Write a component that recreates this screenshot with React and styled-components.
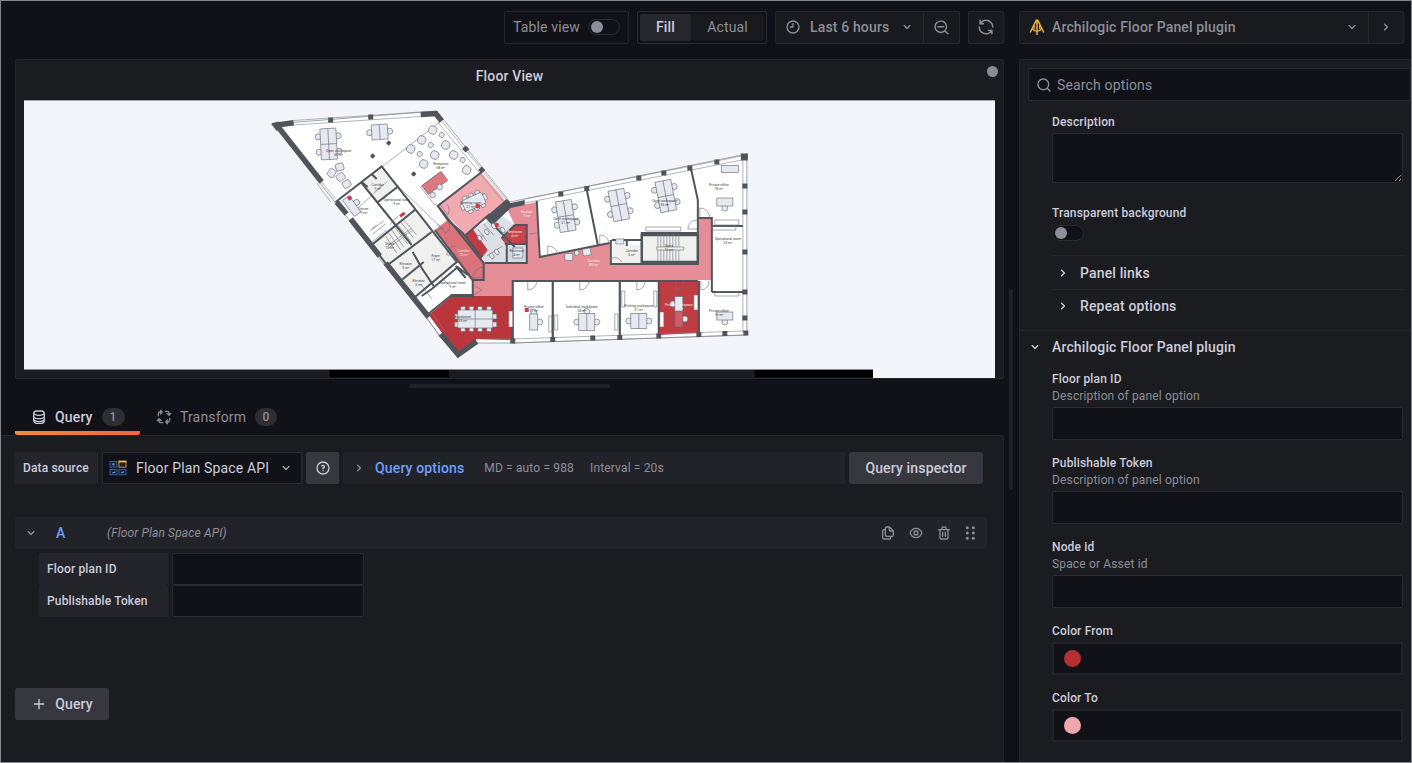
import React from 'react';
import styled, { createGlobalStyle, css } from 'styled-components';

const c = {
  canvas: '#111217',
  panel: '#1b1c20',
  raised: '#24252a',
  line: '#25262b',
  lineStrong: '#2a2b31',
  text: '#ccccdc',
  muted: '#8e8e99',
  button: '#37383d',
  link: '#6e9fff',
  frame: '#85868b',
};

const GlobalStyle = createGlobalStyle`
  *, *::before, *::after { box-sizing: border-box; }
  html, body { margin: 0; height: 100%; background: ${c.canvas}; }
  body {
    font-family: Roboto, "Liberation Sans", sans-serif;
    font-size: 14px;
    line-height: 22px;
    letter-spacing: 0.15px;
    color: ${c.text};
    overflow: hidden;
    -webkit-font-smoothing: antialiased;
  }
`;

/* ---------- icons ---------- */

const ICONS = {
  clock: 'M12,2A10,10,0,1,0,22,12,10,10,0,0,0,12,2Zm0,18a8,8,0,1,1,8-8A8,8,0,0,1,12,20ZM12,6a1,1,0,0,0-1,1v4H8a1,1,0,0,0,0,2h4a1,1,0,0,0,1-1V7A1,1,0,0,0,12,6Z',
  down: 'M17,9.17a1,1,0,0,0-1.41,0L12,12.71,8.46,9.17a1,1,0,0,0-1.41,0,1,1,0,0,0,0,1.42l4.24,4.24a1,1,0,0,0,1.42,0L17,10.59A1,1,0,0,0,17,9.17Z',
  right: 'M14.83,11.29,10.59,7.05a1,1,0,0,0-1.42,0,1,1,0,0,0,0,1.41L12.71,12,9.17,15.54a1,1,0,0,0,0,1.41,1,1,0,0,0,.71.29,1,1,0,0,0,.71-.29l4.24-4.24A1,1,0,0,0,14.83,11.29Z',
  zoomOut: 'M21.71,20.29,18,16.61A9,9,0,1,0,16.61,18l3.68,3.68a1,1,0,0,0,1.42,0A1,1,0,0,0,21.71,20.29ZM11,18a7,7,0,1,1,7-7A7,7,0,0,1,11,18Zm4-8H7a1,1,0,0,0,0,2h8a1,1,0,0,0,0-2Z',
  sync: 'M19.91,15.51H15.38a1,1,0,0,0,0,2h2.4A8,8,0,0,1,4,12a1,1,0,0,0-2,0,10,10,0,0,0,16.88,7.23V21a1,1,0,0,0,2,0V16.5A1,1,0,0,0,19.91,15.51ZM12,2A10,10,0,0,0,5.12,4.77V3a1,1,0,0,0-2,0V7.5a1,1,0,0,0,1,1h4.5a1,1,0,0,0,0-2H6.22A8,8,0,0,1,20,12a1,1,0,0,0,2,0A10,10,0,0,0,12,2Z',
  search: 'M21.71,20.29,18,16.61A9,9,0,1,0,16.61,18l3.68,3.68a1,1,0,0,0,1.42,0A1,1,0,0,0,21.71,20.29ZM11,18a7,7,0,1,1,7-7A7,7,0,0,1,11,18Z',
  help: 'M11.29,15.29a1.58,1.58,0,0,0-.12.15.76.76,0,0,0-.09.18.64.64,0,0,0-.06.18,1.36,1.36,0,0,0,0,.2.84.84,0,0,0,.08.38.9.9,0,0,0,.54.54.94.94,0,0,0,.76,0,.9.9,0,0,0,.54-.54A1,1,0,0,0,13,16a1,1,0,0,0-.29-.71A1,1,0,0,0,11.29,15.29ZM12,2A10,10,0,1,0,22,12,10,10,0,0,0,12,2Zm0,18a8,8,0,1,1,8-8A8,8,0,0,1,12,20ZM12,7A3,3,0,0,0,9.4,8.5a1,1,0,1,0,1.73,1A1,1,0,0,1,12,9a1,1,0,0,1,0,2,1,1,0,0,0-1,1v1a1,1,0,0,0,2,0v-.18A3,3,0,0,0,12,7Z',
  copy: 'M21,8.94a1.31,1.31,0,0,0-.06-.27l0-.09a1.07,1.07,0,0,0-.19-.28h0l-6-6h0a1.07,1.07,0,0,0-.28-.19.32.32,0,0,0-.09,0A.88.88,0,0,0,14.05,2H10A3,3,0,0,0,7,5V6H6A3,3,0,0,0,3,9V19a3,3,0,0,0,3,3h8a3,3,0,0,0,3-3V18h1a3,3,0,0,0,3-3V9S21,9,21,8.94ZM15,5.41,17.59,8H16a1,1,0,0,1-1-1ZM15,19a1,1,0,0,1-1,1H6a1,1,0,0,1-1-1V9A1,1,0,0,1,6,8H7v7a3,3,0,0,0,3,3h5Zm4-4a1,1,0,0,1-1,1H10a1,1,0,0,1-1-1V5a1,1,0,0,1,1-1h3V7a3,3,0,0,0,3,3h3Z',
  eye: 'M21.92,11.6C19.9,6.91,16.1,4,12,4S4.1,6.91,2.08,11.6a1,1,0,0,0,0,.8C4.1,17.09,7.9,20,12,20s7.9-2.91,9.92-7.6A1,1,0,0,0,21.92,11.6ZM12,18c-3.17,0-6.17-2.29-7.9-6C5.83,8.29,8.83,6,12,6s6.17,2.29,7.9,6C18.17,15.71,15.17,18,12,18ZM12,8a4,4,0,1,0,4,4A4,4,0,0,0,12,8Zm0,6a2,2,0,1,1,2-2A2,2,0,0,1,12,14Z',
  trash: 'M10,18a1,1,0,0,0,1-1V11a1,1,0,0,0-2,0v6A1,1,0,0,0,10,18ZM20,6H16V5a3,3,0,0,0-3-3H11A3,3,0,0,0,8,5V6H4A1,1,0,0,0,4,8H5V19a3,3,0,0,0,3,3h8a3,3,0,0,0,3-3V8h1a1,1,0,0,0,0-2ZM10,5a1,1,0,0,1,1-1h2a1,1,0,0,1,1,1V6H10Zm7,14a1,1,0,0,1-1,1H8a1,1,0,0,1-1-1V8H17Zm-3-1a1,1,0,0,0,1-1V11a1,1,0,0,0-2,0v6A1,1,0,0,0,14,18Z',
  plus: 'M19,11H13V5a1,1,0,0,0-2,0v6H5a1,1,0,0,0,0,2h6v6a1,1,0,0,0,2,0V13h6a1,1,0,0,0,0-2Z',
};

const Svg = styled.svg`
  display: block;
  flex: none;
`;

const Icon = ({ name, size = 16 }) => (
  <Svg width={size} height={size} viewBox="0 0 24 24" fill="currentColor">
    <path d={ICONS[name]} />
  </Svg>
);

const DatabaseIcon = () => (
  <Svg width="16" height="16" viewBox="0 0 24 24" fill="none" stroke="currentColor" strokeWidth="1.900">
    <rect x="4" y="3" width="16" height="18.500" rx="4.500" />
    <path d="M4 6.500c1 2 4 3 8 3s7-1 8-3M4 11.500c1 2 4 3 8 3s7-1 8-3M4 16c1 1.800 4 2.800 8 2.800s7-1 8-2.800" />
  </Svg>
);

const ProcessIcon = () => (
  <Svg width="16" height="16" viewBox="0 0 24 24" fill="none" stroke="currentColor" strokeWidth="2" strokeLinecap="round" strokeLinejoin="round">
    {[0, 90, 180, 270].map((angle) => (
      <path key={angle} transform={`rotate(${angle} 12 12)`} d="M3.500 10V7a2.500 2.500 0 0 1 2.500-2.500H9M6.800 2 9.300 4.500 6.800 7.500" />
    ))}
  </Svg>
);

const DragIcon = () => (
  <Svg width="13" height="16" viewBox="0 0 13 16" fill="currentColor">
    {[2.7, 8, 13.3].map((y) => (
      <React.Fragment key={y}>
        <circle cx="3.300" cy={y} r="1.500" />
        <circle cx="9.300" cy={y} r="1.500" />
      </React.Fragment>
    ))}
  </Svg>
);

const ArchilogicLogo = () => (
  <Svg width="16" height="18" viewBox="0 0 16 18" fill="none" stroke="#eab041" strokeWidth="1.500">
    <path d="M8 2.500V17M1.200 14.500 7.200 2.300h1.600l6 12.200" />
    <path d="M3.400 10.300c.8 2 2.500 2.900 4.600 2.900s3.800-.9 4.600-2.900M5.300 7.300c.4 1.500 0 4-.9 5.200M10.700 7.300c-.4 1.500 0 4 .9 5.200" strokeWidth="1.200" />
  </Svg>
);

const SourceLogo = () => (
  <Svg width="18" height="16" viewBox="0 0 18 16" fill="#15233f" stroke="#34589a" strokeWidth="1">
    <rect x="1" y="1.500" width="7" height="5.700" />
    <rect x="10" y="1.500" width="7" height="5.700" stroke="#c98f35" fill="#20201f" />
    <path d="M9.500 1.500h8" stroke="#f0bd45" strokeWidth="1.800" />
    <rect x="1" y="9.500" width="7" height="5.300" />
    <rect x="10" y="9.500" width="7" height="5.300" />
    <path d="M3.300 13l3-1M12 13l3-1.300" stroke="#86a6da" />
    <circle cx="4.500" cy="4.300" r=".8" stroke="#86a6da" />
  </Svg>
);

/* ---------- frame ---------- */

const Frame = styled.div`
  width: 1412px;
  height: 763px;
  display: flex;
  border: 1px solid ${c.frame};
  background: ${c.canvas};
  overflow: hidden;
`;

const MainColumn = styled.main`
  width: 1003px;
  display: flex;
  flex-direction: column;
  flex: none;
`;

const SplitColumn = styled.div`
  width: 15px;
  flex: none;
  display: flex;
  padding: 288px 0 0 5px;
`;

const Handle = styled.div`
  flex: none;
  border-radius: 2px;
  background: #202126;
  ${(p) => (p.$vertical ? css`width: 4px; height: 201px;` : css`width: 201px; height: 4px;`)}
`;

const SideColumn = styled.aside`
  flex: 1;
  min-width: 0;
  display: flex;
  flex-direction: column;
  padding-top: 10px;
`;

/* ---------- toolbar ---------- */

const Toolbar = styled.div`
  display: flex;
  justify-content: flex-end;
  gap: 8px;
  height: 58px;
  padding: 10px 0 0;
`;

const ToolBox = styled.div`
  display: flex;
  align-items: center;
  height: 33px;
  padding-bottom: 1px;
  border: 1px solid ${c.line};
  border-radius: 2px;
  background: ${(p) => (p.$dark ? c.canvas : '#191a1e')};
  color: ${c.muted};
`;

const TableToggle = styled(ToolBox)`
  width: 125px;
  padding-left: 8px;
  gap: 8px;
`;

const Switch = styled.span`
  width: 32px;
  height: 16px;
  flex: none;
  display: flex;
  align-items: center;
  padding-left: 2px;
  border: 1px solid ${c.lineStrong};
  border-radius: 8px;
  background: ${c.canvas};

  &::before {
    content: '';
    width: 12px;
    height: 12px;
    border-radius: 50%;
    background: #8e8e99;
  }
`;

const RadioGroup = styled(ToolBox)`
  width: 130px;
  padding: 2px;
  border-color: ${c.lineStrong};
`;

const RadioOption = styled.span`
  height: 27px;
  display: flex;
  align-items: center;
  justify-content: center;
  padding-bottom: 1px;
  border-radius: 2px;
  width: ${(p) => p.$width}px;
  ${(p) => (p.$active
    ? css`background: #26272c; color: ${c.text}; font-weight: 500;`
    : css`background: #191a1e;`)}
`;

const ToolSegment = styled.span`
  height: 31px;
  display: flex;
  align-items: center;
  justify-content: center;
  width: ${(p) => p.$width}px;
  flex: none;
  ${(p) => p.$divided && css`border-left: 1px solid ${c.line};`}
`;

const RangeSegment = styled(ToolSegment)`
  justify-content: flex-start;
  padding-left: 9px;
  font-weight: 500;
`;

const RangeText = styled.span`
  flex: 1;
  margin-left: 9px;
`;

const ChevronSlot = styled.span`
  margin-right: 8px;
`;

/* ---------- visualisation panel ---------- */

const VizPanel = styled.section`
  width: 989px;
  height: 320px;
  margin-left: 14px;
  display: flex;
  flex-direction: column;
  background: ${c.panel};
  border: 1px solid ${c.line};
  border-radius: 2px;
  padding: 0 8px;
  position: relative;
`;

const VizTitle = styled.h2`
  margin: 0;
  height: 40px;
  padding-top: 5px;
  text-align: center;
  font-size: 14px;
  line-height: 22px;
  font-weight: 500;
`;

const StatusDot = styled.span`
  position: absolute;
  right: 5px;
  top: 6px;
  width: 11px;
  height: 11px;
  border-radius: 50%;
  background: #8b8b94;
`;

const Plan = styled.svg`
  display: block;
  width: 971px;
  height: 278px;
  flex: none;
`;

const HandleRow = styled.div`
  height: 17px;
  padding: 5px 0 0 13px;
  display: flex;
  justify-content: center;
`;

/* ---------- tabs and queries ---------- */

const Tabs = styled.nav`
  display: flex;
  height: 39px;
  padding-left: 14px;
`;

const Tab = styled.div`
  width: ${(p) => p.$width}px;
  height: 39px;
  padding: 6px 0 0 16px;
  display: flex;
  align-items: center;
  color: ${(p) => (p.$active ? c.text : c.muted)};
  font-weight: ${(p) => (p.$active ? 500 : 400)};
  border-bottom: 4px solid transparent;
  ${(p) => p.$active && css`
    background: linear-gradient(90deg, #f58a3c, #ee6548) bottom / 100% 4px no-repeat border-box;
    border-radius: 2px;
  `}
`;

const TabText = styled.span`
  margin: 0 9px 0 8px;
`;

const Counter = styled.span`
  width: 23px;
  height: 18px;
  border-radius: 9px;
  background: #2e2f34;
  color: ${c.muted};
  font-size: 12px;
  line-height: 18px;
  font-weight: 500;
  text-align: center;
`;

const QueryPane = styled.section`
  flex: 1;
  background: ${c.panel};
  border: solid ${c.line};
  border-width: 1px 1px 0 0;
  border-radius: 0 2px 0 0;
  padding: 16px 16px 0 14px;
`;

const SourceRow = styled.div`
  display: flex;
  gap: 4px;
  height: 32px;
  width: 968px;
`;

const LabelCell = styled.span`
  display: flex;
  align-items: center;
  padding-left: 8px;
  height: 32px;
  width: ${(p) => p.$width}px;
  flex: none;
  border-radius: 2px;
  background: ${c.raised};
  font-size: 12px;
  font-weight: 500;
`;

const SourceSelect = styled.span`
  width: 200px;
  flex: none;
  display: flex;
  align-items: center;
  padding: 0 7px 0 6px;
  border: 1px solid ${c.lineStrong};
  border-radius: 2px;
  background: ${c.canvas};
`;

const SourceName = styled.span`
  flex: 1;
  margin-left: 9px;
  white-space: nowrap;
`;

const Dim = styled.span`
  color: #a0a0ac;
`;

const Button = styled.button`
  display: flex;
  align-items: center;
  justify-content: center;
  gap: 8px;
  width: ${(p) => p.$width}px;
  height: ${(p) => p.$height || 32}px;
  flex: none;
  padding: 0;
  border: 0;
  border-radius: 2px;
  background: ${c.button};
  color: ${c.text};
  font: inherit;
  font-weight: 500;
  letter-spacing: inherit;
`;

const OptionsBar = styled.div`
  flex: 1;
  display: flex;
  align-items: center;
  padding-left: 8px;
  border-radius: 2px;
  background: #222328;
  color: ${c.muted};
  font-size: 12px;
`;

const OptionsTitle = styled.span`
  margin: 0 20px 0 8px;
  font-size: 14px;
  font-weight: 500;
  color: ${c.link};
`;

const OptionsInfo = styled.span`
  margin-right: 16px;
`;

const QueryHeader = styled.div`
  display: flex;
  align-items: center;
  width: 972px;
  height: 32px;
  margin-top: 33px;
  padding: 0 10px 0 8px;
  border-radius: 2px;
  background: #222328;
  color: ${c.muted};
`;

const RefId = styled.span`
  width: 51px;
  margin-left: 17px;
  font-weight: 500;
  color: ${c.link};
`;

const QuerySource = styled.em`
  flex: 1;
  font-size: 12px;
`;

const QueryActions = styled.div`
  display: flex;
  gap: 12px;
`;

const QueryFields = styled.div`
  display: flex;
  flex-direction: column;
  padding: 4px 0 0 24px;
`;

const QueryField = styled.label`
  display: flex;
  gap: 4px;
  height: 32px;
`;

const Input = styled.input`
  display: block;
  width: ${(p) => (p.$width ? `${p.$width}px` : '100%')};
  height: ${(p) => p.$height || 33}px;
  border: 1px solid ${c.lineStrong};
  border-radius: 2px;
  background: ${c.canvas};
  color: ${c.text};
  padding: 0 8px;
  font: inherit;
`;

const AddRow = styled.div`
  margin-top: 71px;
`;

/* ---------- options side pane ---------- */

const PluginPicker = styled(ToolBox)`
  width: 385px;
  font-weight: 500;
`;

const PickerMain = styled.span`
  flex: 1;
  display: flex;
  align-items: center;
  padding: 0 8px 0 9px;
`;

const PickerText = styled.span`
  flex: 1;
  margin-left: 7px;
`;

const OptionsPane = styled.section`
  flex: 1;
  margin-top: 15px;
  background: ${c.panel};
  border: solid ${c.line};
  border-width: 1px 0 0 1px;
  border-radius: 2px 0 0 0;
`;

const SearchBox = styled.div`
  display: flex;
  align-items: center;
  gap: 5px;
  height: 33px;
  margin: 8px 0 0 8px;
  padding-left: 7px;
  border: 1px solid ${c.lineStrong};
  border-radius: 2px;
  background: ${c.canvas};
  color: ${c.muted};
`;

const Fields = styled.div`
  width: 383px;
  padding-left: 32px;
`;

const FieldTitle = styled.div`
  font-size: 12px;
  line-height: 16px;
  font-weight: 500;
`;

const FieldHint = styled.div`
  margin-top: 1px;
  font-size: 12px;
  line-height: 16px;
  color: ${c.muted};
`;

const DescriptionField = styled.div`
  height: 93px;
  padding-top: 13px;
`;

const TextArea = styled.textarea`
  display: block;
  width: 100%;
  height: 50px;
  margin-top: 3px;
  border: 1px solid ${c.lineStrong};
  border-radius: 2px;
  background: ${c.canvas};
  resize: vertical;
`;

const ToggleField = styled.div`
  height: 61px;
  padding-top: 11px;

  ${Switch} { margin-top: 4px; }
`;

const SubSection = styled.div`
  display: flex;
  align-items: center;
  gap: 9px;
  height: ${(p) => p.$height}px;
  padding: 0 0 ${(p) => p.$bottom || 0}px 3px;
  border-top: 1px solid ${c.line};
  font-weight: 500;
`;

const PluginSection = styled.div`
  border-top: 1px solid ${c.line};
`;

const SectionTitle = styled.div`
  display: flex;
  align-items: center;
  gap: 9px;
  height: 32px;
  padding: 0 0 1px 7px;
  font-weight: 500;
`;

const OptionField = styled.div`
  height: ${(p) => p.$height}px;
  padding-top: 8px;
`;

const InputSpacer = styled.div`
  margin-top: 3px;
`;

const ColorInput = styled.div`
  display: flex;
  align-items: center;
  height: 33px;
  margin-top: 3px;
  padding-left: 10px;
  border: 2px solid #222328;
  border-radius: 2px;
  background: ${c.canvas};

  &::before {
    content: '';
    width: 17px;
    height: 17px;
    border-radius: 50%;
    background: ${(p) => p.$color};
  }
`;

/* ---------- floor plan drawing ---------- */

const WALL = '#50555c';
const THIN = '#7d828a';
const DESK = '#e6eaf0';

const Desk = ({ x, y, w = 18, h = 14, a = 0, rows = 1, fill = DESK, chairs = 'lr' }) => (
  <g transform={`translate(${x} ${y}) rotate(${a})`} stroke="#5d6470" strokeWidth=".6" fill={fill}>
    {Array.from({ length: rows }).map((_, i) => {
      const cy = -h / 2 + (h / rows) * (i + 0.5);
      return (
        <React.Fragment key={i}>
          {chairs.includes('l') && <circle cx={-w / 2 - 2} cy={cy} r="3" fill={DESK} />}
          {chairs.includes('r') && <circle cx={w / 2 + 2} cy={cy} r="3" fill={DESK} />}
        </React.Fragment>
      );
    })}
    {chairs.includes('b') && <circle cx="0" cy={h / 2 + 2} r="3" fill={DESK} />}
    {chairs.includes('t') && <circle cx="0" cy={-h / 2 - 2} r="3" fill={DESK} />}
    <rect x={-w / 2} y={-h / 2} width={w} height={h} />
    {w >= 14 && rows > 0 && !chairs.includes('b') && <path d={`M0 ${-h / 2}V${h / 2}`} />}
    {rows > 1 && <path d={`M${-w / 2} 0H${w / 2}`} />}
  </g>
);

const RoomLabel = ({ x, y, name, area, light }) => (
  <text
    x={x}
    y={y}
    textAnchor="middle"
    fontSize="3.400"
    letterSpacing="0"
    fill={light ? '#f7e9ea' : '#3c3f44'}
    fontFamily="Roboto, sans-serif"
  >
    {name}
    <tspan x={x} dy="4.200">{area}</tspan>
  </text>
);

const LABELS = [
  [339, 152, 'Open workspace', '65 m²'], [441, 165, 'Reception', '58 m²'],
  [378, 186, 'Corridor', '7 m²'], [397, 201, 'Operational room', '9 m²'],
  [364, 210, 'Server', '9 m²'], [390, 245, 'Stairs', '15 m²'],
  [436, 257, 'Foyer', '17 m²'], [406, 265, 'Elevator', '5 m²'],
  [419, 282, 'Elevator', '5 m²'], [453, 284, 'Operational room', '9 m²'],
  [471, 204, 'Meeting room', '21 m²'], [464, 252, 'Corridor', '10 m²', true],
  [527, 213, 'Storage', '7 m²', true], [515, 233, 'Restroom', '4 m²', true],
  [517, 252, 'Restroom', '4 m²'], [566, 220, 'Open workspace', '31 m²'],
  [594, 262, 'Corridor', '80 m²', true], [665, 202, 'Open workspace', '55 m²'],
  [719, 186, 'Private office', '18 m²'], [728, 240, 'Operational room', '23 m²'],
  [632, 252, 'Corridor', '6 m²'], [669, 247, 'Stairs', '15 m²'],
  [534, 308, 'Private office', '17 m²'], [582, 308, 'Individual workspace', '28 m²'],
  [639, 307, 'Printing workspace', '21 m²'], [679, 306, 'Private workspace', '19 m²', true],
  [719, 312, 'Private office', '15 m²'], [463, 318, 'Boardroom', '35 m²'],
];

const LOUNGE = [[411, 149, 4], [422, 140, 4], [433, 130, 4], [446, 145, 4], [435, 155, 4], [424, 164, 4],
  [454, 155, 4], [467, 170, 4], [420, 154, 2.4], [431, 145, 2.4], [442, 135, 2.4], [463, 160, 2.4]];

const FloorPlan = () => (
  <Plan viewBox="24.500 100 970.500 278" preserveAspectRatio="none">
    <path d="M24.500 100H995V378H873V369.500H24.500Z" fill="#f4f5fa" />
    <path d="M24.500 100.500H995" stroke="#a6a7ab" />
    <path d="M24.500 369.500H873" stroke="#8c8d92" strokeWidth=".7" />
    <path d="M330 370H449V377.300H330ZM755 370H873V377.300H755Z" fill="#000" />

    <path d="M274 124 437 111 510 202 747 154V335L513 343H478L458 358Z" fill="#fff" stroke={THIN} strokeWidth=".7" />

    {/* room fills */}
    <g fill="#f0f0ee">
      <path d="M362 182 382 167 399 185 377 203Z" />
      <path d="M372 245 415 210 457 263 415 299Z" />
      <path d="M642 233H698V263H612V245H642Z" />
    </g>
    <path d="M438 206 482 173 506 201 466 235Z" fill="#f2aab1" />
    <path d="M435 230 448 220 466 235 485 263V281H472Z" fill="#d9727b" />
    <path d="M484 263H527V233H539V257L610 243V263H698V218H712V280H513V296H473V281H484Z" fill="#e58e97" />
    <path d="M507 208 537 202 539 234H527V225H515Z" fill="#e58e97" />
    <path d="M473 229 500 214 515 225 502 238 510 244V263H485Z" fill="#dcdfe5" />
    <path d="M465 236 473 229 488 250 482 258Z" fill="#bf3a42" />
    <path d="M515 225H527V243H505L501 238Z" fill="#c8434b" />
    <path d="M507 244H527V263H507Z" fill="#d7dae0" />
    <path d="M452 296H513V340L477 339 458 354 429 315Z" fill="#ba353c" />
    <path d="M659 281H699V333L659 335Z" fill="#bf3c43" />

    {/* window bands */}
    <g fill="none" stroke={THIN} strokeWidth=".6">
      <path d="M294 120.500 421 112M294 125 421 116.500M438 122 504 202M441 120 507 200M525 203 742 160M525 199 742 156" />
      <path d="M743 160V333M744 335 513 343M744 331 513 339M317 183 331 202M322 182 336 199M427 317 440 337M433 314 445 331M478 339H513" />
      <path d="M382 167 440 122M396 184 443 229M357 209 388 181" />
    </g>

    {/* exterior walls */}
    <g fill="none" stroke={WALL} strokeWidth="5.400">
      <path d="M294 122.700 277 125 322 182M337 202 347 214M351 219 380 256M386 263 429 317M441 334 458.500 354.500 477 341.500" />
      <path d="M421 114.500 436 113.500 442 121" />
    </g>
    <g fill={WALL}>
      <path d="M271.500 124 279 121.500 281 128 277 131Z" />
      <path d="M486 217 507 199 511 203 525 200V205L511 208 494 224Z" />
      {[[331, 120], [371, 117], [466, 149], [482, 170], [561, 194], [587, 188.500], [639, 178], [664, 173], [690, 168], [717, 162],
        [745, 157], [745, 186], [745, 212], [745, 252], [745, 292], [745, 318], [746, 333], [725, 333.500], [699, 334.500], [659, 336],
        [620, 337.500], [593, 338], [553, 339.500], [513, 341]].map(([x, y]) => (
        <rect key={`${x}-${y}`} x={x - 2.500} y={y - 2.500} width="5" height="5" transform={`rotate(${x > 440 && x < 500 ? 45 : 0} ${x} ${y})`} />
      ))}
      <rect x="741" y="153.500" width="7" height="7" />
      {[[389, 143], [373, 156], [414, 174]].map(([x, y]) => (
        <rect key={x} x={x - 2} y={y - 2} width="4" height="4" rx="1" transform={`rotate(40 ${x} ${y})`} />
      ))}
    </g>

    {/* interior walls */}
    <g fill="none" stroke={WALL} strokeWidth="2">
      <path d="M336 202 382 166.500 457 262 413 299 372 245 415 210M362 183 412 245M377 203 399 186M388 265 432 232M402 280 424 262" />
      <path d="M362 182 368 187M372 174 377 179M413 252 422 268 434 286M448 220 438 206 482 172M438 206 484 263V280H473V295H452L426 316M435 230 473 280" />
      <path d="M416 299 424 309M422 296 432 289 438 284 458 267 468 275M456 266 466 278" />
      <path d="M448 220 463 233 482 258M466 235 490 214M487 218 515 247M515 225H527V263H485M502 238 515 225M505 244H527M507 244V263M537 201 540 257 610 243M587 190 598 245" />
      <path d="M691 168 698 200V264H611V240M642 262V233H697M612 240H642M627 240V246M697 218H712V292M712 226H743M712 292H743" />
      <path d="M512 281H698M513 281V341M553 281V340M620 281V338M659 281V335M699 281V333M452 296H474" strokeWidth="2.200" />
      <path d="M642 262H698V235H642Z" strokeWidth="2.400" />
    </g>

    {/* partitions, stairs and doors */}
    <g fill="none" stroke="#6d7179" strokeWidth=".6">
      <path d="M658 234V247M661 234V247M664 234V247M667 234V247M670 234V247M673 234V247M676 234V247M679 234V247M658 250V261M661 250V261M664 250V261M667 250V261M670 250V261M673 250V261M676 250V261M679 250V261M657 247H684V250H657Z" />
      <path d="M386 236 397 253M389 233 401 250M392 230 404 247M395 227 408 244M398 225 411 241M401 222 414 238M404 220 417 235M388 246 412 228M389 248 413 230" />
      <path d="M528 281V290A9 9 0 0 0 537 281M580 281V290A9 9 0 0 0 589 281M637 281V290A8 8 0 0 0 645 281M676 281V290A8 8 0 0 0 684 281M701 281V290A8 8 0 0 0 709 281" />
      <path d="M700 218V208A10 10 0 0 1 710 218M698 229H688A9 9 0 0 1 697 220M548 256V246A10 10 0 0 1 558 254M600 245V235A9 9 0 0 1 609 242M484 267A11 11 0 0 0 473 278H484M457 255H447A9 9 0 0 1 456 246M441 205 448 215A9 9 0 0 0 447 204M438 224 446 233A8 8 0 0 0 449 222" />
      <path d="M421 284 432 299M440 275 449 285M427 234 443 228M375 192 382 185M612 258A9 9 0 0 1 622 262M474 285 482 290 474 295M529 234 537 233" />
      <path d="M549 316H552V332H549ZM555 315H558V330H555ZM615 314H618V330H615ZM622 291H625V307H622ZM654 291H657V307H654ZM646 227H681V231H646ZM715 220H739V225H715ZM712 226H736V230H712ZM715 292H739V296H715Z" />
      <path d="M421 187 440 172M421 187 435 205 437 203M370 244 387 230M373 229 384 221M390 225 398 216" />
      <path d="M478 229 487 241M484 224 494 235M490 219 500 229M474 244 484 235M487 256 503 246M496 222 509 238" />
    </g>
    <g fill="#fff" stroke="#8b5055" strokeWidth=".5">
      <path d="M694 295H698V310H694ZM660 312H664V327H660ZM509 311H513V327H509Z" />
    </g>

    {/* furniture */}
    <Desk x={329} y={144} w={16} h={31} a={-3} rows={2} />
    <Desk x={380} y={132} w={16} h={15} a={-4} />
    <Desk x={566} y={216} w={16} h={31} a={-9} rows={2} />
    <Desk x={619} y={205} w={16} h={31} a={-11} rows={2} />
    <Desk x={666} y={196} w={16} h={31} a={-11} rows={2} />
    <Desk x={587} y={322} w={16} h={17} chairs="lrt" />
    <Desk x={639} y={321} w={16} h={15} />
    <Desk x={534} y={322} w={8} h={16} chairs="rt" />
    <Desk x={725} y={202} w={16} h={8} chairs="b" />
    <Desk x={725} y={316} w={16} h={8} chairs="b" />
    <Desk x={730} y={169} w={17} h={7} chairs="" rows={0} />
    <Desk x={679} y={304} w={8} h={15} chairs="l" />
    <Desk x={679} y={319} w={8} h={16} chairs="r" fill="#d45a63" />
    <Desk x={435} y={183} w={24} h={11} a={-36} chairs="" rows={0} fill="#dc7882" />
    <Desk x={352} y={206} w={8} h={20} a={-36} chairs="r" />
    <g fill={DESK} stroke="#5d6470" strokeWidth=".6">
      {LOUNGE.map(([x, y, r]) => <rect key={`${x}${y}`} x={x - r} y={y - r} width={r * 2} height={r * 2} rx={r * 0.75} transform={`rotate(25 ${x} ${y})`} />)}
      {[[332, 173, -55], [340, 167, -15], [341, 177, -35], [347, 184, -30], [569, 257, 0], [587, 252, -10]].map(([x, y, a]) => (
        <rect key={`${x}${y}`} x={x - 4} y={y - 3.500} width="8" height="7" rx="1.500" transform={`rotate(${a} ${x} ${y})`} />
      ))}
      <circle cx="577" cy="253" r="2.400" />
      <circle cx="433" cy="195" r="2.700" />
      <circle cx="440" cy="187" r="2.700" />
      <g transform="translate(474 202) rotate(-25)">
        {[-7, 0, 7].map((x) => <rect key={x} x={x - 2} y="-9" width="4.500" height="18" rx="1" />)}
        <rect x="-14" y="-3" width="28" height="6" rx="1" />
        <rect x="-11" y="-6" width="22" height="12" rx="2" />
      </g>
      {[463, 471.500, 480, 489].map((x) => <rect key={x} x={x - 2} y="306.500" width="4.500" height="25" rx=".5" />)}
      <path d="M455 314H497V319H455ZM455 322H497V327H455Z" />
      <path d="M458 310H493V328H458ZM475.500 310V328M458 319H493" />
      {[[480, 238], [487, 232], [494, 226], [497, 252], [503, 230], [492, 256]].map(([x, y]) => (
        <ellipse key={`${x}${y}`} cx={x} cy={y} rx="2" ry="3" transform={`rotate(-35 ${x} ${y})`} />
      ))}
      <path d="M513 248H523V258H513ZM616 239H624V244H616ZM373 234 386 224M370 231 377 225" />
    </g>
    <g fill="#c93e48">
      <circle cx="478" cy="206" r="2.400" />
      <rect x="525" y="308" width="4" height="4" />
      <rect x="348" y="196" width="4" height="4" transform="rotate(-35 350 198)" />
      <rect x="400" y="213" width="6" height="3" transform="rotate(-35 403 215)" />
      <rect x="495" y="223" width="4" height="4" rx="1" />
    </g>
    {LABELS.map(([x, y, name, area, light]) => (
      <RoomLabel key={`${x}-${y}`} x={x} y={y} name={name} area={area} light={light} />
    ))}
  </Plan>
);

/* ---------- page ---------- */

const TextOption = ({ title, hint }) => (
  <OptionField $height={84}>
    <FieldTitle>{title}</FieldTitle>
    <FieldHint>{hint}</FieldHint>
    <InputSpacer><Input aria-label={title} /></InputSpacer>
  </OptionField>
);

export default function App() {
  return (
    <>
      <GlobalStyle />
      <Frame>
        <MainColumn>
          <Toolbar>
            <TableToggle $dark>Table view<Switch /></TableToggle>
            <RadioGroup $dark>
              <RadioOption $active $width={51}>Fill</RadioOption>
              <RadioOption $width={73}>Actual</RadioOption>
            </RadioGroup>
            <ToolBox>
              <RangeSegment $width={147}>
                <Icon name="clock" />
                <RangeText>Last 6 hours</RangeText>
                <ChevronSlot><Icon name="down" /></ChevronSlot>
              </RangeSegment>
              <ToolSegment $width={36} $divided><Icon name="zoomOut" size={17} /></ToolSegment>
            </ToolBox>
            <ToolBox><ToolSegment $width={34}><Icon name="sync" size={18} /></ToolSegment></ToolBox>
          </Toolbar>

          <VizPanel>
            <VizTitle>Floor View</VizTitle>
            <StatusDot />
            <FloorPlan />
          </VizPanel>
          <HandleRow><Handle /></HandleRow>

          <Tabs>
            <Tab $active $width={125}>
              <DatabaseIcon /><TabText>Query</TabText><Counter>1</Counter>
            </Tab>
            <Tab $width={137}>
              <ProcessIcon /><TabText>Transform</TabText><Counter>0</Counter>
            </Tab>
          </Tabs>

          <QueryPane>
            <SourceRow>
              <LabelCell $width={83}>Data source</LabelCell>
              <SourceSelect>
                <SourceLogo />
                <SourceName>Floor Plan Space API</SourceName>
                <Dim><Icon name="down" /></Dim>
              </SourceSelect>
              <Button $width={33} aria-label="Help"><Icon name="help" /></Button>
              <OptionsBar>
                <Icon name="right" />
                <OptionsTitle>Query options</OptionsTitle>
                <OptionsInfo>MD = auto = 988</OptionsInfo>
                <OptionsInfo>Interval = 20s</OptionsInfo>
              </OptionsBar>
              <Button $width={134}>Query inspector</Button>
            </SourceRow>

            <QueryHeader>
              <Icon name="down" />
              <RefId>A</RefId>
              <QuerySource>(Floor Plan Space API)</QuerySource>
              <QueryActions>
                <Icon name="copy" />
                <Icon name="eye" />
                <Icon name="trash" />
                <DragIcon />
              </QueryActions>
            </QueryHeader>
            <QueryFields>
              <QueryField>
                <LabelCell $width={129}>Floor plan ID</LabelCell>
                <Input $width={192} $height={32} />
              </QueryField>
              <QueryField>
                <LabelCell $width={129}>Publishable Token</LabelCell>
                <Input $width={192} $height={32} />
              </QueryField>
            </QueryFields>
            <AddRow>
              <Button $width={94}><Icon name="plus" />Query</Button>
            </AddRow>
          </QueryPane>
        </MainColumn>

        <SplitColumn><Handle $vertical /></SplitColumn>

        <SideColumn>
          <PluginPicker>
            <PickerMain>
              <ArchilogicLogo />
              <PickerText>Archilogic Floor Panel plugin</PickerText>
              <Icon name="down" />
            </PickerMain>
            <ToolSegment $width={35} $divided><Icon name="right" /></ToolSegment>
          </PluginPicker>

          <OptionsPane>
            <SearchBox><Icon name="search" />Search options</SearchBox>
            <Fields>
              <DescriptionField>
                <FieldTitle>Description</FieldTitle>
                <TextArea />
              </DescriptionField>
              <ToggleField>
                <FieldTitle>Transparent background</FieldTitle>
                <Switch />
              </ToggleField>
              <SubSection $height={34}><Icon name="right" />Panel links</SubSection>
              <SubSection $height={41} $bottom={8}><Icon name="right" />Repeat options</SubSection>
            </Fields>
            <PluginSection>
              <SectionTitle><Icon name="down" />Archilogic Floor Panel plugin</SectionTitle>
              <Fields>
                <TextOption title="Floor plan ID" hint="Description of panel option" />
                <TextOption title="Publishable Token" hint="Description of panel option" />
                <TextOption title="Node id" hint="Space or Asset id" />
                <OptionField $height={67}>
                  <FieldTitle>Color From</FieldTitle>
                  <ColorInput $color="#b52f34" />
                </OptionField>
                <OptionField $height={67}>
                  <FieldTitle>Color To</FieldTitle>
                  <ColorInput $color="#f2a6ad" />
                </OptionField>
              </Fields>
            </PluginSection>
          </OptionsPane>
        </SideColumn>
      </Frame>
    </>
  );
}
